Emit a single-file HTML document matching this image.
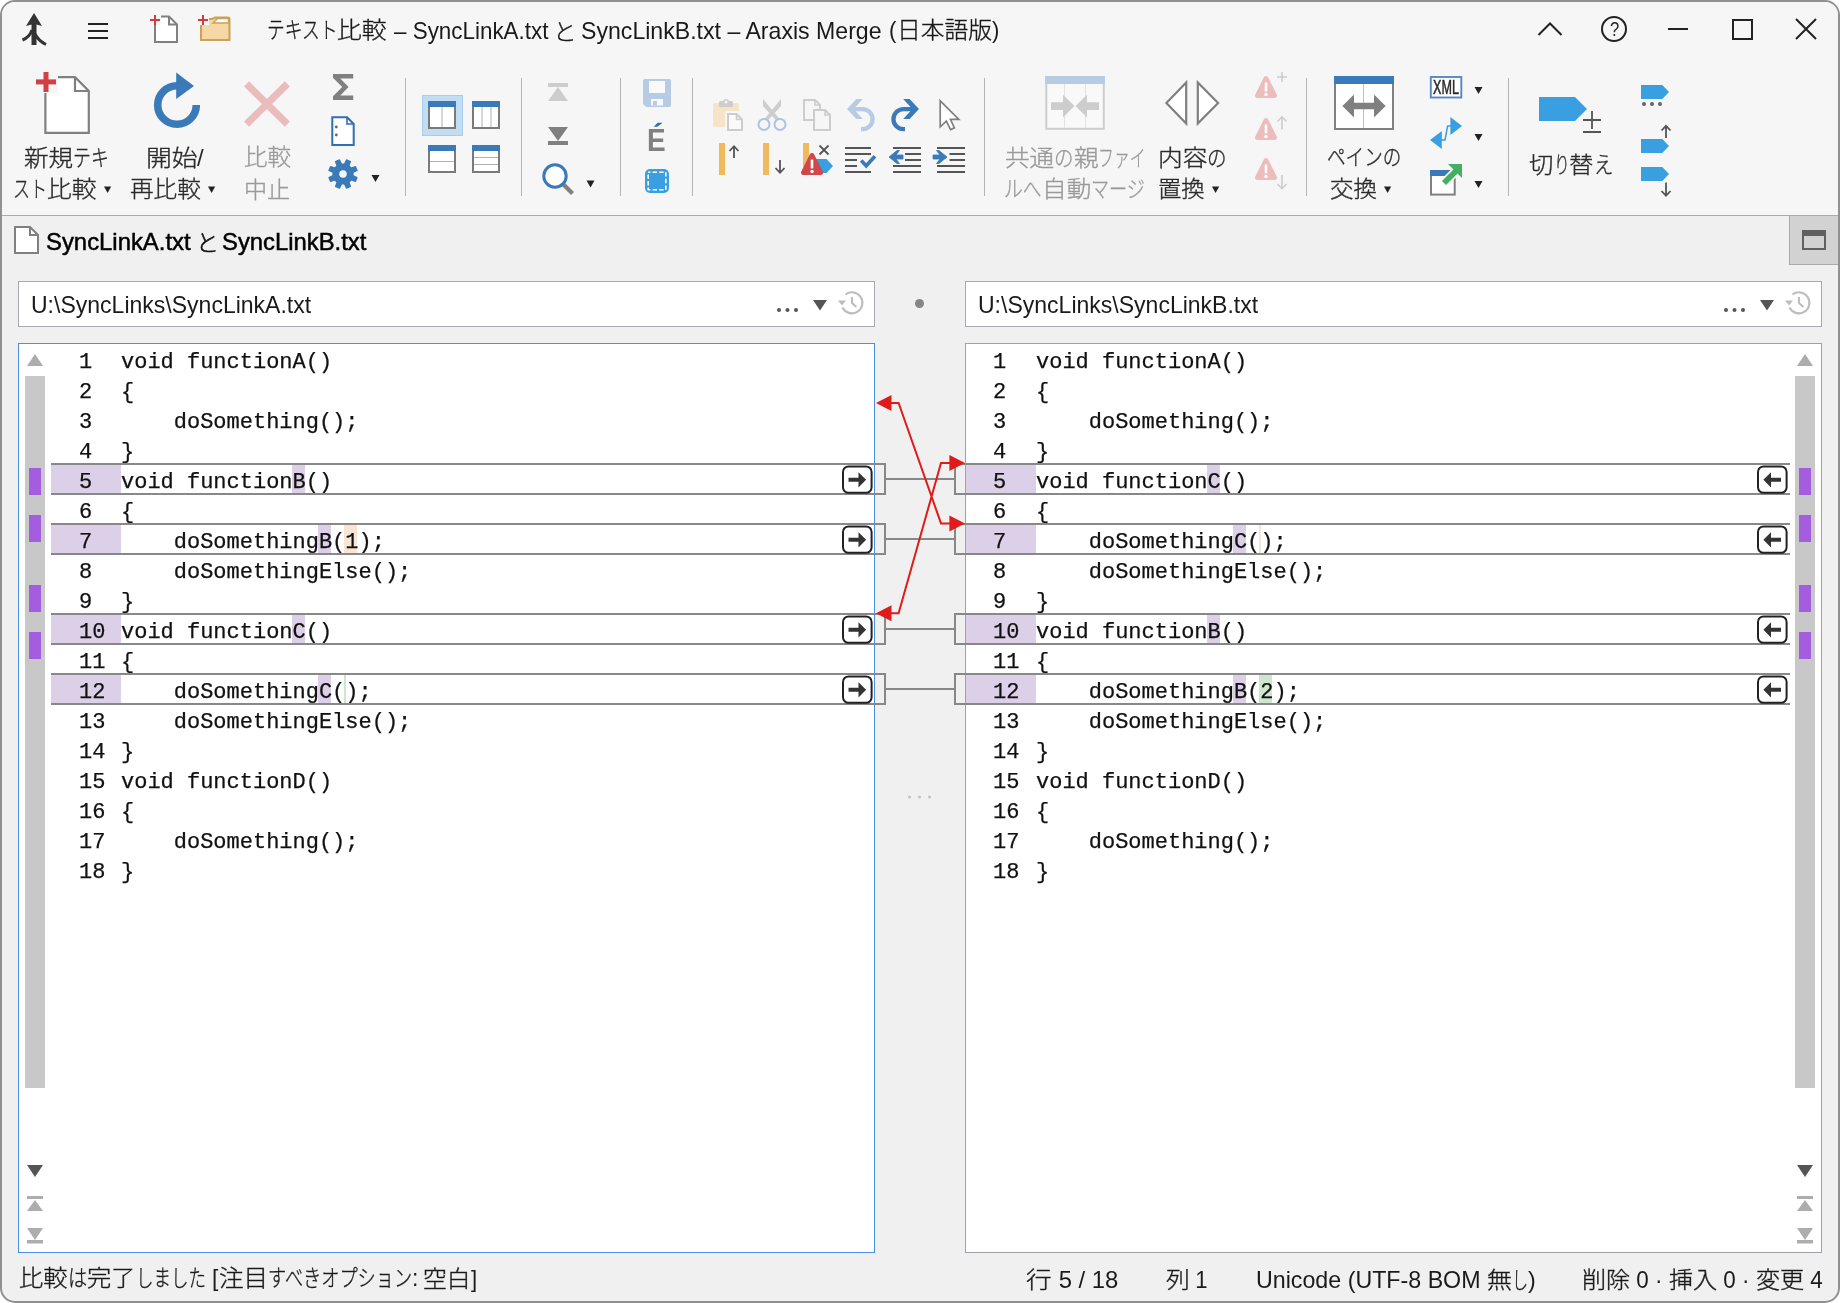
<!DOCTYPE html>
<html lang="ja"><head><meta charset="utf-8"><title>Araxis Merge</title>
<style>
*{box-sizing:border-box;margin:0;padding:0}
html,body{width:1840px;height:1303px;background:#fff;overflow:hidden}
body{font-family:"Liberation Sans","Noto Sans CJK JP",sans-serif;color:#1a1a1a;position:relative}
#win{position:absolute;left:0;top:0;width:1840px;height:1303px;border:2px solid #919191;border-radius:15px;background:#f0f0f0;overflow:hidden}
#in{position:absolute;left:-2px;top:-2px;width:1840px;height:1303px;will-change:transform}
#top{position:absolute;left:0;top:0;width:1840px;height:215px;background:#f6f6f6}
#topline{position:absolute;left:0;top:215px;width:1840px;height:1px;background:#ababab}
.abs{position:absolute}
.t{position:absolute;white-space:pre;transform-origin:0 0;line-height:40px;-webkit-text-stroke:0.35px currentColor}
.t span{font-weight:400;-webkit-text-stroke:0}
.t.xb span{-webkit-text-stroke:0.55px #2a2a2a;color:#2a2a2a}
.t.sb,.t.sb span{-webkit-text-stroke:0.5px #000;color:#000}
.sep{position:absolute;top:78px;width:1px;height:118px;background:#b4b4b4}
.pbox{position:absolute;top:281px;height:46px;width:857px;background:#fff;border:1px solid #a8a8b0}
.ed{position:absolute;top:343px;height:910px;width:857px;background:#fff;border:1px solid #a0a0a8}
.ln,.cd{position:absolute;font-family:"Liberation Mono","DejaVu Sans Mono",monospace;font-size:22px;line-height:30px;height:30px;white-space:pre;color:#111;letter-spacing:-0.007px;-webkit-text-stroke:0.25px #111}
.pg{position:absolute;height:30px;background:#dccfe8}
.hl{position:absolute;height:30px}
.bx{position:absolute;border:2px solid #888;box-sizing:content-box}
.cn{position:absolute;height:2px;background:#888}
.ab{position:absolute}
.strip{position:absolute;width:20px;top:376px;height:712px;background:#c8c8c8}
</style></head><body>
<div id="win"><div id="in">
<div id="top"></div><div id="topline"></div>
<!-- title bar -->
<svg class="abs" style="left:14px;top:8px" width="40" height="44" viewBox="0 0 40 44"><path d="M20 5 L28 18 L22.5 16.5 V37 H17.5 V16.5 L12 18 Z" fill="#333"/><path d="M18 22 C16 28 11 31 8.5 32" fill="none" stroke="#333" stroke-width="3"/><path d="M21 26 C24 32 30 35.5 32 36.5" fill="none" stroke="#333" stroke-width="3"/></svg>
<svg class="abs" style="left:86px;top:20px" width="24" height="22" viewBox="0 0 24 22"><path d="M2 4h20M2 11h20M2 18h20" stroke="#222" stroke-width="1.8" fill="none"/></svg>
<svg class="abs" style="left:148px;top:12px" width="34" height="34" viewBox="0 0 34 34"><path d="M7 4.5H21L29 12.5V30H7Z" fill="#fff" stroke="#808080" stroke-width="2"/><path d="M21 4.5V12.5H29" fill="none" stroke="#808080" stroke-width="2"/><rect x="0" y="0" width="13" height="13" fill="#f6f6f6"/><path d="M7 3v10M2 8h10" stroke="#d23c40" stroke-width="2" fill="none"/></svg>
<svg class="abs" style="left:196px;top:12px" width="36" height="32" viewBox="0 0 36 32"><path d="M5 7H16L19 5.5H32Q33.5 5.5 33.5 7V28H5Z" fill="#f5d8a6" stroke="#c9a255" stroke-width="2"/><path d="M19 9 L21.5 6.5H32.5V11H17Z" fill="#fff" stroke="#c9a255" stroke-width="1.5"/><rect x="0" y="0" width="13" height="13" fill="#f6f6f6"/><path d="M7 3v10M2 8h10" stroke="#d23c40" stroke-width="2" fill="none"/></svg>
<svg class="abs" style="left:1530px;top:10px" width="300" height="40" viewBox="0 0 300 40"><g fill="none" stroke="#222" stroke-width="2"><path d="M8.5 25 L20 13.5 L31.5 25"/><circle cx="84" cy="19" r="12"/><path d="M138 19h20"/><rect x="203" y="10" width="19" height="19"/><path d="M266 9 L286 29 M286 9 L266 29"/></g></svg>
<svg class="abs" style="left:0;top:0" width="1840" height="215" viewBox="0 0 1840 215"><path d="M45.4 77.2H75L88.8 91V132.8H45.4Z" fill="#fff" stroke="#808080" stroke-width="2.2"/><path d="M75 77.2V91H88.8" fill="none" stroke="#808080" stroke-width="2.2"/>
<rect x="34" y="70" width="24" height="23" fill="#f6f6f6"/><rect x="36" y="79.4" width="20" height="5" fill="#d23f44"/><rect x="43.5" y="72" width="5" height="20" fill="#d23f44"/>
<path d="M104 186.5h7.2l-3.6 6.6z" fill="#222"/>
<path d="M196.3 105A19.3 19.3 0 1 1 177 85.7" fill="none" stroke="#3a7ab8" stroke-width="7.6"/><path d="M176.2 72.6L194 86L176.2 99Z" fill="#3a7ab8"/>
<path d="M208 186.5h7.2l-3.6 6.6z" fill="#222"/>
<path d="M246.5 83.9L287.3 124.1M287.3 83.9L246.5 124.1" stroke="#eabcbc" stroke-width="7.2" fill="none"/>
<path d="M333 74H353.2V78.6H340.3L348.6 87L340.3 95.4H353.2V100H333V96.2L342.2 87L333 77.8Z" fill="#808080"/>
<path d="M332.3 117.2H347L353.7 124V145H332.3Z" fill="#fff" stroke="#2f6fb5" stroke-width="2"/><path d="M347 117.2V124H353.7" fill="none" stroke="#2f6fb5" stroke-width="1.6"/><circle cx="336.3" cy="127" r="1.4" fill="#666"/><circle cx="336.3" cy="135" r="1.4" fill="#666"/>
<path d="M352.86 175.64 L356.95 177.58 L355.39 181.33 L351.14 179.81 L348.81 182.14 L350.33 186.39 L346.58 187.95 L344.64 183.86 L341.36 183.86 L339.42 187.95 L335.67 186.39 L337.19 182.14 L334.86 179.81 L330.61 181.33 L329.05 177.58 L333.14 175.64 L333.14 172.36 L329.05 170.42 L330.61 166.67 L334.86 168.19 L337.19 165.86 L335.67 161.61 L339.42 160.05 L341.36 164.14 L344.64 164.14 L346.58 160.05 L350.33 161.61 L348.81 165.86 L351.14 168.19 L355.39 166.67 L356.95 170.42 L352.86 172.36Z M347.5 174A4.5 4.5 0 1 0 338.5 174A4.5 4.5 0 1 0 347.5 174Z" fill="#3a7ab8" fill-rule="evenodd" stroke="#3a7ab8" stroke-width="1.5" stroke-linejoin="round"/>
<path d="M371.5 175h8l-4.0 7z" fill="#222"/>
<rect x="422.5" y="95.5" width="40" height="40" fill="#c2dcf2" stroke="#a6cdf0" stroke-width="1"/>
<rect x="429" y="102" width="26" height="26" fill="#fff" stroke="#7a7a7a" stroke-width="2"/><rect x="428" y="101" width="28" height="6" fill="#3a7ab8"/>
<path d="M442 107V127" stroke="#b0b0b0" stroke-width="1"/>
<rect x="473" y="102" width="26" height="26" fill="#fff" stroke="#7a7a7a" stroke-width="2"/><rect x="472" y="101" width="28" height="6" fill="#3a7ab8"/>
<path d="M482 107V127M491 107V127" stroke="#b0b0b0" stroke-width="1"/>
<rect x="429" y="146" width="26" height="26" fill="#fff" stroke="#7a7a7a" stroke-width="2"/><rect x="428" y="145" width="28" height="6" fill="#3a7ab8"/>
<path d="M430 161.5H454" stroke="#b0b0b0" stroke-width="1"/>
<rect x="473" y="146" width="26" height="26" fill="#fff" stroke="#7a7a7a" stroke-width="2"/><rect x="472" y="145" width="28" height="6" fill="#3a7ab8"/>
<path d="M474 157.5H498M474 164.5H498" stroke="#b0b0b0" stroke-width="1"/>
<path d="M548 83h20v4h-20zM558 87l10 14h-20z" fill="#cdcdcd"/>
<path d="M548 127h20l-10 14zM548 141h20v4h-20z" fill="#808080"/>
<path d="M563 184L572.5 193.5" stroke="#808080" stroke-width="4.2"/><circle cx="555" cy="176" r="11.2" fill="#fff" stroke="#3a7ab8" stroke-width="3"/>
<path d="M586.5 180.5h8l-4.0 7z" fill="#222"/>
<path d="M645 79H669Q671 79 671 81V105Q671 107 669 107H646L643 104V81Q643 79 645 79Z" fill="#b6cbe4"/><rect x="649" y="81" width="16" height="12" fill="#f9f9f9"/><rect x="651" y="99" width="12" height="6.5" fill="#f9f9f9"/><rect x="653" y="101" width="4" height="4.5" fill="#b6cbe4"/>
<rect x="645" y="169" width="24" height="24" rx="5" fill="#3a9fe0"/><rect x="648.2" y="172.2" width="17.6" height="17.6" fill="none" stroke="#fff" stroke-width="1.6" stroke-dasharray="4.4 2.2" stroke-dashoffset="2.2"/>
<path d="M714.5 103H737.5Q739 103 739 104.5V111H725V127H714.5Q713 127 713 125.5V104.5Q713 103 714.5 103Z" fill="#f6e4c8"/><path d="M719 107V102.5Q719 101 720.5 101H723Q723.5 99 726 99Q728.5 99 729 101H731.5Q733 101 733 102.5V107Z" fill="#cdcdcd"/><circle cx="726" cy="102" r="1.5" fill="#f6f6f6"/><path d="M728 114H736.6L742 119.4V130H728Z" fill="#fafafa" stroke="#cdcdcd" stroke-width="2"/><path d="M736.6 114V119.4H742" fill="none" stroke="#cdcdcd" stroke-width="1.8"/>
<path d="M763 99L779.2 118.6L776.6 121L763 106Z" fill="#cdcdcd"/><path d="M781 99L764.8 118.6L767.4 121L781 106Z" fill="#cdcdcd"/><circle cx="764" cy="124.4" r="5.5" fill="#f6f6f6" stroke="#a9c4e4" stroke-width="2"/><circle cx="780" cy="124.4" r="5.5" fill="#f6f6f6" stroke="#a9c4e4" stroke-width="2"/>
<path d="M804 100H815L820 105V120H804Z" fill="#f6f6f6" stroke="#cdcdcd" stroke-width="2"/><path d="M815 100V105H820" fill="none" stroke="#cdcdcd" stroke-width="1.6"/>
<path d="M814 110H825L830 115V130H814Z" fill="#f6f6f6" stroke="#cdcdcd" stroke-width="2"/><path d="M825 110V115H830" fill="none" stroke="#cdcdcd" stroke-width="1.6"/>
<g transform="translate(847 0) scale(1 1)"><path d="M0 109L9.4 99H15.8L6.6 109L15.8 119H9.4Z" fill="#b6cbe4"/><path d="M6 109.1H15.5A10.05 10.05 0 0 1 15.5 129.2H14" fill="none" stroke="#b6cbe4" stroke-width="4.3"/></g>
<g transform="translate(919 0) scale(-1 1)"><path d="M0 109L9.4 99H15.8L6.6 109L15.8 119H9.4Z" fill="#3a7ab8"/><path d="M6 109.1H15.5A10.05 10.05 0 0 1 15.5 129.2H14" fill="none" stroke="#3a7ab8" stroke-width="4.3"/></g>
<path d="M940.2 100.8V126.8L946.3 121.2L950.6 129.6L954.4 127.9L950.4 119.3H958.8Z" fill="#fff" stroke="#808080" stroke-width="1.7" stroke-linejoin="miter"/>
<rect x="719" y="143" width="6" height="32" fill="#f0b95c"/><path d="M734 158V146.5M729.5 151L734 146.2L738.5 151" fill="none" stroke="#555" stroke-width="1.8"/>
<rect x="763" y="143" width="6" height="32" fill="#f0b95c"/><path d="M780 160V172.5M775.5 168L780 172.8L784.5 168" fill="none" stroke="#555" stroke-width="1.8"/>
<rect x="803" y="143" width="6" height="24" fill="#f0b95c"/><path d="M815 159H826.5L833 166L826.5 173H815Z" fill="#3a9fe0"/><path d="M819.5 145.5L828.5 154.5M828.5 145.5L819.5 154.5" stroke="#555" stroke-width="1.8"/>
<path d="M812.0 155.5L820.5 172.5H803.5Z" fill="#d2474a" stroke="#d2474a" stroke-width="5.0" stroke-linejoin="round"/>
<rect x="810.7" y="159.6" width="2.6" height="8.8" fill="#fff"/><circle cx="812.0" cy="171.48" r="1.7" fill="#fff"/>
<path d="M845 148H871M845 154H871M845 160H857M845 166H857M845 172H871" stroke="#555" stroke-width="2"/><path d="M861.2 160.6L866.2 165.8L875 156.2" fill="none" stroke="#3a7ab8" stroke-width="3.6"/>
<path d="M893 148H921M905 154H921M905 160H921M893 166H921M893 172H921" stroke="#555" stroke-width="2"/><path d="M889 157L897 150.5H899.5L896 155H903V159H896L899.5 163.5H897Z" fill="#3a7ab8" stroke="#3a7ab8" stroke-width="0.8"/>
<path d="M937 148H965M949.5 154H965M949.5 160H965M937 166H965M937 172H965" stroke="#555" stroke-width="2"/><path d="M947 157L939 150.5H936.5L940 155H933V159H940L936.5 163.5H939Z" fill="#3a7ab8" stroke="#3a7ab8" stroke-width="0.8"/>
<rect x="1046.3" y="77" width="57.5" height="51.8" fill="#f9f9f9" stroke="#cdcdcd" stroke-width="2"/><rect x="1045.3" y="76" width="59.5" height="8" fill="#b6cbe4"/><path d="M1064.5 84V128M1085.5 84V128" stroke="#e2e2e2" stroke-width="1"/>
<path d="M1051 102.3H1063V94.8L1074.5 106L1063 117.4V110H1051Z" fill="#cdcdcd"/><path d="M1099 102.3H1087V94.8L1075.5 106L1087 117.4V110H1099Z" fill="#cdcdcd"/>
<path d="M1166.4 103L1186.2 82.4V123.6Z" fill="#fff" stroke="#808080" stroke-width="2.2"/><path d="M1218.1 103L1197.8 82.4V123.6Z" fill="#fff" stroke="#808080" stroke-width="2.2"/>
<path d="M1212 186.5h7.2l-3.6 6.6z" fill="#222"/>
<path d="M1266.0 78.5L1274.5 95.5H1257.5Z" fill="#edbcbc" stroke="#edbcbc" stroke-width="5.0" stroke-linejoin="round"/>
<rect x="1264.7" y="82.6" width="2.6" height="8.8" fill="#fff"/><circle cx="1266.0" cy="94.48" r="1.7" fill="#fff"/>
<path d="M1266.0 120.5L1274.5 137.5H1257.5Z" fill="#edbcbc" stroke="#edbcbc" stroke-width="5.0" stroke-linejoin="round"/>
<rect x="1264.7" y="124.6" width="2.6" height="8.8" fill="#fff"/><circle cx="1266.0" cy="136.48" r="1.7" fill="#fff"/>
<path d="M1266.0 160.5L1274.5 177.5H1257.5Z" fill="#edbcbc" stroke="#edbcbc" stroke-width="5.0" stroke-linejoin="round"/>
<rect x="1264.7" y="164.6" width="2.6" height="8.8" fill="#fff"/><circle cx="1266.0" cy="176.48" r="1.7" fill="#fff"/>
<path d="M1282 72V82M1277 77H1287" stroke="#cdcdcd" stroke-width="1.6"/>
<path d="M1282 129.5V117M1277.5 121.5L1282 116.8L1286.5 121.5" fill="none" stroke="#cdcdcd" stroke-width="1.6"/>
<path d="M1282 175V188M1277.5 184L1282 188.7L1286.5 184" fill="none" stroke="#cdcdcd" stroke-width="1.6"/>
<rect x="1335" y="77" width="58" height="52" fill="#fff" stroke="#808080" stroke-width="2"/><rect x="1334" y="76" width="60" height="8" fill="#3a7ab8"/><path d="M1363.5 84V128" stroke="#c0c0c0" stroke-width="1"/><path d="M1342.4 106L1354 94.5V102.7H1374V94.5L1385.6 106L1374 117.5V109.3H1354V117.5Z" fill="#808080"/>
<path d="M1384 186.5h7.2l-3.6 6.6z" fill="#222"/>
<rect x="1430.8" y="77" width="30.5" height="20.5" fill="#fff" stroke="#5489c6" stroke-width="1.9"/>
<path d="M1474.5 87h8l-4.0 7z" fill="#222"/>
<path d="M1474.5 134h8l-4.0 7z" fill="#222"/>
<path d="M1474.5 181h8l-4.0 7z" fill="#222"/>
<path d="M1462 126L1450.4 117V135Z" fill="#3a9fe0"/><path d="M1430 140L1441.8 131V149Z" fill="#3a9fe0"/><path d="M1441 140H1445L1447.6 126H1451" fill="none" stroke="#3a9fe0" stroke-width="1.5"/>
<rect x="1431" y="171" width="23.7" height="23.6" fill="#fff" stroke="#808080" stroke-width="2"/><rect x="1430" y="170" width="25.7" height="6" fill="#3a7ab8"/>
<path d="M1444 183L1457 170" stroke="#f6f6f6" stroke-width="9"/><path d="M1448 162.2H1463.6V178Z" fill="#f6f6f6"/><path d="M1444 183L1456 171" stroke="#42b060" stroke-width="5.6"/><path d="M1448 164H1462V178Z" fill="#42b060"/>
<path d="M1539 97H1575L1587 109L1575 121H1539Z" fill="#3a9fe0"/><path d="M1592 111V129M1583 120H1601M1583 132H1601" stroke="#555" stroke-width="1.8"/>
<path d="M1641 85H1662.3L1669 92L1662.3 99H1641Z" fill="#3a9fe0"/>
<path d="M1641 139H1662.3L1669 146L1662.3 153H1641Z" fill="#3a9fe0"/>
<path d="M1641 167H1662.3L1669 174L1662.3 181H1641Z" fill="#3a9fe0"/>
<circle cx="1644" cy="104" r="2" fill="#666"/><circle cx="1652" cy="104" r="2" fill="#666"/><circle cx="1660" cy="104" r="2" fill="#666"/>
<path d="M1666 138V126M1661.5 130.5L1666 125.8L1670.5 130.5" fill="none" stroke="#555" stroke-width="1.8"/>
<path d="M1666 182.5V195M1661.5 191L1666 195.7L1670.5 191" fill="none" stroke="#555" stroke-width="1.8"/></svg>
<div class="sep" style="left:405px"></div>
<div class="sep" style="left:521px"></div>
<div class="sep" style="left:620px"></div>
<div class="sep" style="left:692px"></div>
<div class="sep" style="left:984px"></div>
<div class="sep" style="left:1306px"></div>
<div class="sep" style="left:1508px"></div>
<!-- doc tab -->
<svg class="abs" style="left:13px;top:225px" width="28" height="30" viewBox="0 0 28 30"><path d="M2 2H17L25 10V28H2Z" fill="#fff" stroke="#808080" stroke-width="2"/><path d="M17 2V10H25" fill="none" stroke="#808080" stroke-width="2"/></svg>
<div class="abs" style="left:1789px;top:216px;width:49px;height:49px;background:#d2d2d2;border-left:1px solid #ababab;border-bottom:1px solid #ababab"></div>
<svg class="abs" style="left:1802px;top:230px" width="24" height="20" viewBox="0 0 24 20"><rect x="1" y="1" width="22" height="18" fill="none" stroke="#606060" stroke-width="2"/><rect x="0" y="0" width="24" height="6" fill="#606060"/></svg>
<!-- path boxes -->
<div class="pbox" style="left:18px"></div>
<div class="pbox" style="left:965px"></div>
<div class="abs" style="left:915px;top:299px;width:9px;height:9px;border-radius:5px;background:#858585"></div>
<!-- editors -->
<div class="ed" style="left:18px;border-color:#4a90e2"></div>
<div class="ed" style="left:965px"></div>
<div class="strip" style="left:25px"></div><div class="strip" style="left:1795px"></div>
<div class="pg" style="left:51px;top:465px;width:70px"></div>
<div class="pg" style="left:51px;top:525px;width:70px"></div>
<div class="pg" style="left:51px;top:615px;width:70px"></div>
<div class="pg" style="left:51px;top:675px;width:70px"></div>
<div class="hl" style="left:291.5px;top:465px;width:13.195px;background:#dccfe8"></div>
<div class="hl" style="left:317.9px;top:525px;width:13.195px;background:#dccfe8"></div>
<div class="hl" style="left:344.3px;top:525px;width:13.195px;background:#f7e5d5"></div>
<div class="hl" style="left:291.5px;top:615px;width:13.195px;background:#dccfe8"></div>
<div class="hl" style="left:317.9px;top:675px;width:13.195px;background:#dccfe8"></div>
<div class="hl" style="left:344.3px;top:675px;width:2px;background:#cde6cd"></div>
<div class="ln" style="left:79px;top:348px">1</div>
<div class="cd" style="left:121px;top:348px">void functionA()</div>
<div class="ln" style="left:79px;top:378px">2</div>
<div class="cd" style="left:121px;top:378px">{</div>
<div class="ln" style="left:79px;top:408px">3</div>
<div class="cd" style="left:121px;top:408px">    doSomething();</div>
<div class="ln" style="left:79px;top:438px">4</div>
<div class="cd" style="left:121px;top:438px">}</div>
<div class="ln" style="left:79px;top:468px">5</div>
<div class="cd" style="left:121px;top:468px">void functionB()</div>
<div class="ln" style="left:79px;top:498px">6</div>
<div class="cd" style="left:121px;top:498px">{</div>
<div class="ln" style="left:79px;top:528px">7</div>
<div class="cd" style="left:121px;top:528px">    doSomethingB(1);</div>
<div class="ln" style="left:79px;top:558px">8</div>
<div class="cd" style="left:121px;top:558px">    doSomethingElse();</div>
<div class="ln" style="left:79px;top:588px">9</div>
<div class="cd" style="left:121px;top:588px">}</div>
<div class="ln" style="left:79px;top:618px">10</div>
<div class="cd" style="left:121px;top:618px">void functionC()</div>
<div class="ln" style="left:79px;top:648px">11</div>
<div class="cd" style="left:121px;top:648px">{</div>
<div class="ln" style="left:79px;top:678px">12</div>
<div class="cd" style="left:121px;top:678px">    doSomethingC();</div>
<div class="ln" style="left:79px;top:708px">13</div>
<div class="cd" style="left:121px;top:708px">    doSomethingElse();</div>
<div class="ln" style="left:79px;top:738px">14</div>
<div class="cd" style="left:121px;top:738px">}</div>
<div class="ln" style="left:79px;top:768px">15</div>
<div class="cd" style="left:121px;top:768px">void functionD()</div>
<div class="ln" style="left:79px;top:798px">16</div>
<div class="cd" style="left:121px;top:798px">{</div>
<div class="ln" style="left:79px;top:828px">17</div>
<div class="cd" style="left:121px;top:828px">    doSomething();</div>
<div class="ln" style="left:79px;top:858px">18</div>
<div class="cd" style="left:121px;top:858px">}</div>
<div class="pg" style="left:966px;top:465px;width:70px"></div>
<div class="pg" style="left:966px;top:525px;width:70px"></div>
<div class="pg" style="left:966px;top:615px;width:70px"></div>
<div class="pg" style="left:966px;top:675px;width:70px"></div>
<div class="hl" style="left:1206.5px;top:465px;width:13.195px;background:#dccfe8"></div>
<div class="hl" style="left:1232.9px;top:525px;width:13.195px;background:#dccfe8"></div>
<div class="hl" style="left:1259.3px;top:525px;width:2px;background:#f7e5d5"></div>
<div class="hl" style="left:1206.5px;top:615px;width:13.195px;background:#dccfe8"></div>
<div class="hl" style="left:1232.9px;top:675px;width:13.195px;background:#dccfe8"></div>
<div class="hl" style="left:1259.3px;top:675px;width:13.195px;background:#cde6cd"></div>
<div class="ln" style="left:993px;top:348px">1</div>
<div class="cd" style="left:1036px;top:348px">void functionA()</div>
<div class="ln" style="left:993px;top:378px">2</div>
<div class="cd" style="left:1036px;top:378px">{</div>
<div class="ln" style="left:993px;top:408px">3</div>
<div class="cd" style="left:1036px;top:408px">    doSomething();</div>
<div class="ln" style="left:993px;top:438px">4</div>
<div class="cd" style="left:1036px;top:438px">}</div>
<div class="ln" style="left:993px;top:468px">5</div>
<div class="cd" style="left:1036px;top:468px">void functionC()</div>
<div class="ln" style="left:993px;top:498px">6</div>
<div class="cd" style="left:1036px;top:498px">{</div>
<div class="ln" style="left:993px;top:528px">7</div>
<div class="cd" style="left:1036px;top:528px">    doSomethingC();</div>
<div class="ln" style="left:993px;top:558px">8</div>
<div class="cd" style="left:1036px;top:558px">    doSomethingElse();</div>
<div class="ln" style="left:993px;top:588px">9</div>
<div class="cd" style="left:1036px;top:588px">}</div>
<div class="ln" style="left:993px;top:618px">10</div>
<div class="cd" style="left:1036px;top:618px">void functionB()</div>
<div class="ln" style="left:993px;top:648px">11</div>
<div class="cd" style="left:1036px;top:648px">{</div>
<div class="ln" style="left:993px;top:678px">12</div>
<div class="cd" style="left:1036px;top:678px">    doSomethingB(2);</div>
<div class="ln" style="left:993px;top:708px">13</div>
<div class="cd" style="left:1036px;top:708px">    doSomethingElse();</div>
<div class="ln" style="left:993px;top:738px">14</div>
<div class="cd" style="left:1036px;top:738px">}</div>
<div class="ln" style="left:993px;top:768px">15</div>
<div class="cd" style="left:1036px;top:768px">void functionD()</div>
<div class="ln" style="left:993px;top:798px">16</div>
<div class="cd" style="left:1036px;top:798px">{</div>
<div class="ln" style="left:993px;top:828px">17</div>
<div class="cd" style="left:1036px;top:828px">    doSomething();</div>
<div class="ln" style="left:993px;top:858px">18</div>
<div class="cd" style="left:1036px;top:858px">}</div>
<div class="bx" style="left:51px;top:463px;width:833px;height:28px;border-left:none"></div><div class="bx" style="left:954px;top:463px;width:834px;height:28px;border-right:none"></div><div class="cn" style="left:886px;top:478px;width:68px"></div><svg class="ab" style="left:841px;top:465px" width="32" height="30" viewBox="0 0 32 30"><rect x="2" y="1.4" width="28.6" height="26.4" rx="5.5" fill="#fff" stroke="#222" stroke-width="2"/><path d="M7.5 12.8h10v-5.6l7.6 7.6-7.6 7.6v-5.6h-10z" fill="#333"/></svg><svg class="ab" style="left:1756px;top:465px" width="32" height="30" viewBox="0 0 32 30"><rect x="2" y="1.4" width="28.6" height="26.4" rx="5.5" fill="#fff" stroke="#222" stroke-width="2"/><path d="M25 12.8h-10v-5.6l-7.6 7.6 7.6 7.6v-5.6h10z" fill="#333"/></svg><div class="bx" style="left:51px;top:523px;width:833px;height:28px;border-left:none"></div><div class="bx" style="left:954px;top:523px;width:834px;height:28px;border-right:none"></div><div class="cn" style="left:886px;top:538px;width:68px"></div><svg class="ab" style="left:841px;top:525px" width="32" height="30" viewBox="0 0 32 30"><rect x="2" y="1.4" width="28.6" height="26.4" rx="5.5" fill="#fff" stroke="#222" stroke-width="2"/><path d="M7.5 12.8h10v-5.6l7.6 7.6-7.6 7.6v-5.6h-10z" fill="#333"/></svg><svg class="ab" style="left:1756px;top:525px" width="32" height="30" viewBox="0 0 32 30"><rect x="2" y="1.4" width="28.6" height="26.4" rx="5.5" fill="#fff" stroke="#222" stroke-width="2"/><path d="M25 12.8h-10v-5.6l-7.6 7.6 7.6 7.6v-5.6h10z" fill="#333"/></svg><div class="bx" style="left:51px;top:613px;width:833px;height:28px;border-left:none"></div><div class="bx" style="left:954px;top:613px;width:834px;height:28px;border-right:none"></div><div class="cn" style="left:886px;top:628px;width:68px"></div><svg class="ab" style="left:841px;top:615px" width="32" height="30" viewBox="0 0 32 30"><rect x="2" y="1.4" width="28.6" height="26.4" rx="5.5" fill="#fff" stroke="#222" stroke-width="2"/><path d="M7.5 12.8h10v-5.6l7.6 7.6-7.6 7.6v-5.6h-10z" fill="#333"/></svg><svg class="ab" style="left:1756px;top:615px" width="32" height="30" viewBox="0 0 32 30"><rect x="2" y="1.4" width="28.6" height="26.4" rx="5.5" fill="#fff" stroke="#222" stroke-width="2"/><path d="M25 12.8h-10v-5.6l-7.6 7.6 7.6 7.6v-5.6h10z" fill="#333"/></svg><div class="bx" style="left:51px;top:673px;width:833px;height:28px;border-left:none"></div><div class="bx" style="left:954px;top:673px;width:834px;height:28px;border-right:none"></div><div class="cn" style="left:886px;top:688px;width:68px"></div><svg class="ab" style="left:841px;top:675px" width="32" height="30" viewBox="0 0 32 30"><rect x="2" y="1.4" width="28.6" height="26.4" rx="5.5" fill="#fff" stroke="#222" stroke-width="2"/><path d="M7.5 12.8h10v-5.6l7.6 7.6-7.6 7.6v-5.6h-10z" fill="#333"/></svg><svg class="ab" style="left:1756px;top:675px" width="32" height="30" viewBox="0 0 32 30"><rect x="2" y="1.4" width="28.6" height="26.4" rx="5.5" fill="#fff" stroke="#222" stroke-width="2"/><path d="M25 12.8h-10v-5.6l-7.6 7.6 7.6 7.6v-5.6h10z" fill="#333"/></svg>
<svg class="abs" style="left:0;top:0" width="1840" height="1303" viewBox="0 0 1840 1303"><path d="M27 366L35 354L43 366Z" fill="#adadad"/><path d="M27 1165H43L35 1177Z" fill="#555"/><rect x="27" y="1196" width="16" height="3" fill="#adadad"/><path d="M27 1211L35 1200L43 1211Z" fill="#adadad"/><path d="M27 1228H43L35 1240Z" fill="#adadad"/><rect x="27" y="1240" width="16" height="3.5" fill="#adadad"/><path d="M1797 366L1805 354L1813 366Z" fill="#adadad"/><path d="M1797 1165H1813L1805 1177Z" fill="#555"/><rect x="1797" y="1196" width="16" height="3" fill="#adadad"/><path d="M1797 1211L1805 1200L1813 1211Z" fill="#adadad"/><path d="M1797 1228H1813L1805 1240Z" fill="#adadad"/><rect x="1797" y="1240" width="16" height="3.5" fill="#adadad"/><rect x="29" y="468" width="12" height="27" fill="#a55de0"/><rect x="29" y="515" width="12" height="27" fill="#a55de0"/><rect x="29" y="585" width="12" height="27" fill="#a55de0"/><rect x="29" y="632" width="12" height="27" fill="#a55de0"/><rect x="1799" y="468" width="12" height="27" fill="#a55de0"/><rect x="1799" y="515" width="12" height="27" fill="#a55de0"/><rect x="1799" y="585" width="12" height="27" fill="#a55de0"/><rect x="1799" y="632" width="12" height="27" fill="#a55de0"/><path d="M891 403H898.6L941 523.4H950M891 613.3H898.6L941 463H950" fill="none" stroke="#e01b1b" stroke-width="2"/><path d="M876 403L891.5 395V411Z" fill="#e01b1b"/><path d="M876 613.3L891.5 605.3V621.3Z" fill="#e01b1b"/><path d="M965 463L949.4 455V471Z" fill="#e01b1b"/><path d="M965 523.4L949.4 515.4V531.4Z" fill="#e01b1b"/><circle cx="909.5" cy="797" r="1.6" fill="#c4c4c4"/><circle cx="919.5" cy="797" r="1.6" fill="#c4c4c4"/><circle cx="929.5" cy="797" r="1.6" fill="#c4c4c4"/><circle cx="779" cy="310" r="2" fill="#555"/><circle cx="787.5" cy="310" r="2" fill="#555"/><circle cx="796" cy="310" r="2" fill="#555"/><path d="M813 300H827L820 310.5Z" fill="#555"/><path d="M845.5 294.5A10.5 10.5 0 1 1 842.5 307.5" fill="none" stroke="#bdbdbd" stroke-width="2.1"/><path d="M852 297V303L856.5 307" fill="none" stroke="#bdbdbd" stroke-width="2.1"/><path d="M838 300.5H846L842 305.5Z" fill="#bdbdbd"/><circle cx="1726" cy="310" r="2" fill="#555"/><circle cx="1734.5" cy="310" r="2" fill="#555"/><circle cx="1743" cy="310" r="2" fill="#555"/><path d="M1760 300H1774L1767 310.5Z" fill="#555"/><path d="M1792.5 294.5A10.5 10.5 0 1 1 1789.5 307.5" fill="none" stroke="#bdbdbd" stroke-width="2.1"/><path d="M1799 297V303L1803.5 307" fill="none" stroke="#bdbdbd" stroke-width="2.1"/><path d="M1785 300.5H1793L1789 305.5Z" fill="#bdbdbd"/></svg>
<div class="t" id="ta_0" style="left:266.94px;top:10.30px;color:#1a1a1a;font-size:22.8px;font-weight:300;transform:scaleX(0.7774)">テキスト</div><div class="t" id="ta_1" style="left:337.31px;top:10.30px;color:#1a1a1a;font-size:22.8px;font-weight:300;transform:scaleX(1.0895)">比較</div><div class="t" id="tb" style="left:394.00px;top:11.00px;color:#1a1a1a;font-size:22.8px;font-weight:300;transform:scaleX(0.9337)"><span style="font-size:24px">– SyncLinkA.txt</span></div><div class="t" id="tc" style="left:553.24px;top:11.60px;color:#1a1a1a;font-size:22.8px;font-weight:300;transform:scaleX(1.0400)">と</div><div class="t" id="td" style="left:581.44px;top:11.00px;color:#1a1a1a;font-size:22.8px;font-weight:300;transform:scaleX(0.9629)"><span style="font-size:24px">SyncLinkB.txt – Araxis Merge</span></div><div class="t" id="te_0" style="left:889.38px;top:9.50px;color:#1a1a1a;font-size:22.8px;font-weight:300;transform:scaleX(0.9213)"><span style="font-size:24px">(</span></div><div class="t" id="te_1" style="left:896.75px;top:9.50px;color:#1a1a1a;font-size:22.8px;font-weight:300;transform:scaleX(1.0429)">日本語版</div><div class="t" id="te_2" style="left:991.85px;top:9.50px;color:#1a1a1a;font-size:22.8px;font-weight:300;transform:scaleX(0.9213)"><span style="font-size:24px">)</span></div><div class="t" id="q" style="left:1609.61px;top:8.20px;color:#222;font-size:22.8px;font-weight:300;transform:scaleX(0.7900)"><span style="font-size:21px">?</span></div><div class="t sb" id="ba" style="left:46.21px;top:222.00px;color:#1a1a1a;font-size:22.8px;font-weight:300;transform:scaleX(0.9945)"><span style="font-size:24px">SyncLinkA.txt</span></div><div class="t sb" id="bb" style="left:196.47px;top:222.50px;color:#1a1a1a;font-size:22.8px;font-weight:300;transform:scaleX(1.0067)">と</div><div class="t sb" id="bc" style="left:222.41px;top:222.00px;color:#1a1a1a;font-size:22.8px;font-weight:300;transform:scaleX(0.9924)"><span style="font-size:24px">SyncLinkB.txt</span></div><div class="t" id="pa" style="left:31.14px;top:285.40px;color:#1a1a1a;font-size:22.8px;font-weight:300;transform:scaleX(0.9591)"><span style="font-size:24px">U:\SyncLinks\SyncLinkA.txt</span></div><div class="t" id="pb" style="left:978.14px;top:285.40px;color:#1a1a1a;font-size:22.8px;font-weight:300;transform:scaleX(0.9591)"><span style="font-size:24px">U:\SyncLinks\SyncLinkB.txt</span></div><div class="t" id="s1a_0" style="left:19.49px;top:1258.00px;color:#1a1a1a;font-size:22.8px;font-weight:300;transform:scaleX(1.0658)">比較</div><div class="t" id="s1a_1" style="left:68.09px;top:1258.00px;color:#1a1a1a;font-size:22.8px;font-weight:300;transform:scaleX(0.8438)">は</div><div class="t" id="s1a_2" style="left:87.32px;top:1258.00px;color:#1a1a1a;font-size:22.8px;font-weight:300;transform:scaleX(1.0658)">完了</div><div class="t" id="s1a_3" style="left:135.92px;top:1258.00px;color:#1a1a1a;font-size:22.8px;font-weight:300;transform:scaleX(0.7661)">しました</div><div class="t" id="s1b_0" style="left:212.44px;top:1258.30px;color:#1a1a1a;font-size:22.8px;font-weight:300;transform:scaleX(0.9537)"><span style="font-size:24px">[</span></div><div class="t" id="s1b_1" style="left:218.80px;top:1258.30px;color:#1a1a1a;font-size:22.8px;font-weight:300;transform:scaleX(1.0796)">注目</div><div class="t" id="s1b_2" style="left:268.03px;top:1258.30px;color:#1a1a1a;font-size:22.8px;font-weight:300;transform:scaleX(0.7970)">すべきオプション</div><div class="t" id="s1b_3" style="left:412.11px;top:1258.30px;color:#1a1a1a;font-size:22.8px;font-weight:300;transform:scaleX(0.9537)"><span style="font-size:24px">:</span></div><div class="t" id="s1c_0" style="left:422.97px;top:1258.80px;color:#1a1a1a;font-size:22.8px;font-weight:300;transform:scaleX(1.0456)">空白</div><div class="t" id="s1c_1" style="left:470.64px;top:1258.80px;color:#1a1a1a;font-size:22.8px;font-weight:300;transform:scaleX(0.9236)"><span style="font-size:24px">]</span></div><div class="t" id="s2_0" style="left:1025.97px;top:1259.50px;color:#1a1a1a;font-size:22.8px;font-weight:300;transform:scaleX(1.1251)">行</div><div class="t" id="s2_1" style="left:1051.62px;top:1259.50px;color:#1a1a1a;font-size:22.8px;font-weight:300;transform:scaleX(0.9939)"><span style="font-size:24px"> 5 / 18</span></div><div class="t" id="s3_0" style="left:1165.60px;top:1259.50px;color:#1a1a1a;font-size:22.8px;font-weight:300;transform:scaleX(1.0426)">列</div><div class="t" id="s3_1" style="left:1189.37px;top:1259.50px;color:#1a1a1a;font-size:22.8px;font-weight:300;transform:scaleX(0.9210)"><span style="font-size:24px"> 1</span></div><div class="t" id="s4_0" style="left:1256.04px;top:1259.50px;color:#1a1a1a;font-size:22.8px;font-weight:300;transform:scaleX(0.9676)"><span style="font-size:24px">Unicode (UTF-8 BOM </span></div><div class="t" id="s4_1" style="left:1487.02px;top:1259.50px;color:#1a1a1a;font-size:22.8px;font-weight:300;transform:scaleX(1.0953)">無</div><div class="t" id="s4_2" style="left:1511.99px;top:1259.50px;color:#1a1a1a;font-size:22.8px;font-weight:300;transform:scaleX(0.7074)">し</div><div class="t" id="s4_3" style="left:1528.12px;top:1259.50px;color:#1a1a1a;font-size:22.8px;font-weight:300;transform:scaleX(0.9676)"><span style="font-size:24px">)</span></div><div class="t" id="s5_0" style="left:1581.79px;top:1259.50px;color:#1a1a1a;font-size:22.8px;font-weight:300;transform:scaleX(1.0580)">削除</div><div class="t" id="s5_1" style="left:1630.03px;top:1259.50px;color:#1a1a1a;font-size:22.8px;font-weight:300;transform:scaleX(0.9346)"><span style="font-size:24px"> 0 · </span></div><div class="t" id="s5_2" style="left:1668.67px;top:1259.50px;color:#1a1a1a;font-size:22.8px;font-weight:300;transform:scaleX(1.0580)">挿入</div><div class="t" id="s5_3" style="left:1716.90px;top:1259.50px;color:#1a1a1a;font-size:22.8px;font-weight:300;transform:scaleX(0.9346)"><span style="font-size:24px"> 0 · </span></div><div class="t" id="s5_4" style="left:1755.54px;top:1259.50px;color:#1a1a1a;font-size:22.8px;font-weight:300;transform:scaleX(1.0580)">変更</div><div class="t" id="s5_5" style="left:1803.78px;top:1259.50px;color:#1a1a1a;font-size:22.8px;font-weight:300;transform:scaleX(0.9346)"><span style="font-size:24px"> 4</span></div><div class="t" id="l1a_0" style="left:24.07px;top:137.50px;color:#2b2b2b;font-size:22.8px;font-weight:300;transform:scaleX(1.0778)">新規</div><div class="t" id="l1a_1" style="left:73.21px;top:137.50px;color:#2b2b2b;font-size:22.8px;font-weight:300;transform:scaleX(0.7859)">テキ</div><div class="t" id="l1b_0" style="left:12.85px;top:168.70px;color:#2b2b2b;font-size:22.8px;font-weight:300;transform:scaleX(0.7472)">スト</div><div class="t" id="l1b_1" style="left:46.92px;top:168.70px;color:#2b2b2b;font-size:22.8px;font-weight:300;transform:scaleX(1.0869)">比較</div><div class="t" id="l2a_0" style="left:145.77px;top:137.50px;color:#2b2b2b;font-size:22.8px;font-weight:300;transform:scaleX(1.1329)">開始</div><div class="t" id="l2a_1" style="left:197.42px;top:137.50px;color:#2b2b2b;font-size:22.8px;font-weight:300;transform:scaleX(1.0007)"><span style="font-size:24px">/</span></div><div class="t" id="l2b" style="left:129.56px;top:168.70px;color:#2b2b2b;font-size:22.8px;font-weight:300;transform:scaleX(1.0358)">再比較</div><div class="t" id="l3a" style="left:243.57px;top:137.00px;color:#9a9a9a;font-size:22.8px;font-weight:300;transform:scaleX(1.0318)">比較</div><div class="t" id="l3b" style="left:243.78px;top:169.70px;color:#9a9a9a;font-size:22.8px;font-weight:300;transform:scaleX(1.0116)">中止</div><div class="t" id="l4a_0" style="left:1005.12px;top:137.50px;color:#9a9a9a;font-size:22.8px;font-weight:300;transform:scaleX(1.0799)">共通</div><div class="t" id="l4a_1" style="left:1054.35px;top:137.50px;color:#9a9a9a;font-size:22.8px;font-weight:300;transform:scaleX(0.8549)">の</div><div class="t" id="l4a_2" style="left:1073.84px;top:137.50px;color:#9a9a9a;font-size:22.8px;font-weight:300;transform:scaleX(1.0799)">親</div><div class="t" id="l4a_3" style="left:1098.46px;top:137.50px;color:#9a9a9a;font-size:22.8px;font-weight:300;transform:scaleX(0.6975)">ファイ</div><div class="t" id="l4b_0" style="left:1004.23px;top:169.20px;color:#9a9a9a;font-size:22.8px;font-weight:300;transform:scaleX(0.8225)">ルへ</div><div class="t" id="l4b_1" style="left:1041.73px;top:169.20px;color:#9a9a9a;font-size:22.8px;font-weight:300;transform:scaleX(1.0817)">自動</div><div class="t" id="l4b_2" style="left:1091.05px;top:169.20px;color:#9a9a9a;font-size:22.8px;font-weight:300;transform:scaleX(0.7940)">マージ</div><div class="t" id="l5a_0" style="left:1157.59px;top:137.50px;color:#2b2b2b;font-size:22.8px;font-weight:300;transform:scaleX(1.0813)">内容</div><div class="t" id="l5a_1" style="left:1206.89px;top:137.50px;color:#2b2b2b;font-size:22.8px;font-weight:300;transform:scaleX(0.8561)">の</div><div class="t" id="l5b" style="left:1157.98px;top:169.20px;color:#2b2b2b;font-size:22.8px;font-weight:300;transform:scaleX(1.0227)">置換</div><div class="t" id="l6a" style="left:1326.99px;top:137.00px;color:#2b2b2b;font-size:22.8px;font-weight:300;transform:scaleX(0.8148)">ペインの</div><div class="t" id="l6b" style="left:1329.77px;top:168.70px;color:#2b2b2b;font-size:22.8px;font-weight:300;transform:scaleX(1.0273)">交換</div><div class="t" id="l7_0" style="left:1529.08px;top:144.50px;color:#2b2b2b;font-size:22.8px;font-weight:300;transform:scaleX(1.0711)">切</div><div class="t" id="l7_1" style="left:1553.50px;top:144.50px;color:#2b2b2b;font-size:22.8px;font-weight:300;transform:scaleX(0.6917)">り</div><div class="t" id="l7_2" style="left:1569.27px;top:144.50px;color:#2b2b2b;font-size:22.8px;font-weight:300;transform:scaleX(1.0711)">替</div><div class="t" id="l7_3" style="left:1593.68px;top:144.50px;color:#2b2b2b;font-size:22.8px;font-weight:300;transform:scaleX(0.8479)">え</div><div class="t xb" id="xml" style="left:1433.20px;top:65.80px;color:#333;font-size:22.8px;font-weight:300;transform:scaleX(0.6293)"><span style="font-size:20px">XML</span></div><div class="t" id="eac" style="left:646.95px;top:120.00px;color:#808080;font-size:22.8px;font-weight:300;font-weight:bold;transform:scaleX(0.8737)"><span style="font-size:32px;font-weight:700">É</span></div>
<svg class="abs" style="left:640px;top:114px" width="36" height="16" viewBox="640 114 36 16"><rect x="646" y="114" width="24" height="14.4" fill="#f6f6f6"/><path d="M653.8 126.8L657.6 122.7H662.6L657.4 126.8Z" fill="#2f6fb5"/></svg>
</div></div>
</body></html>
